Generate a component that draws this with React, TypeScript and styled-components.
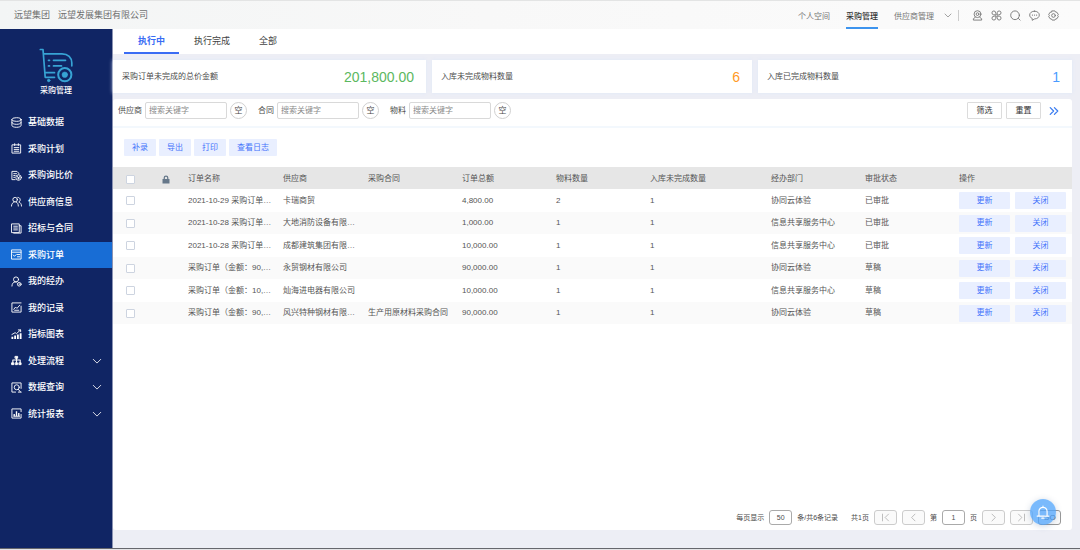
import React, { useId } from "react";
import styled, { createGlobalStyle } from "styled-components";

const GlobalStyle = createGlobalStyle`
  *, *::before, *::after { box-sizing: border-box; }
  body {
    margin: 0;
    font-family: "Liberation Sans", "Noto Sans CJK SC", sans-serif;
    font-size: 8px;
    line-height: 12px;
    color: #4c4c4c;
    background: #fff;
  }
  button, input { font: inherit; color: inherit; margin: 0; }
  button { padding: 0; cursor: pointer; }
  a { color: inherit; text-decoration: none; }
  ul { list-style: none; margin: 0; padding: 0; }
`;

const Page = styled.div`
  min-height: 100vh;
  display: flex;
  flex-direction: column;
`;

const TopBar = styled.header`
  display: flex;
  align-items: stretch;
  justify-content: space-between;
  height: 29px;
  padding: 0 21px 0 14px;
  border-top: 1px solid #e3e4e4;
  background: linear-gradient(90deg, #f3f5f5, #f8f8f8 45%, #fbfbfb);
`;

const Company = styled.div`
  display: flex;
  align-items: center;
  gap: 8px;
  font-size: 9px;
  color: #6f6f6f;
`;

const TopRight = styled.div`
  display: flex;
`;

const TopNav = styled.nav`
  display: flex;
  gap: 16px;
`;

const TopLink = styled.a<{ $active?: boolean }>`
  display: flex;
  align-items: center;
  padding-top: 6px;
  border-bottom: 2px solid ${(p) => (p.$active ? "#3d94ee" : "transparent")};
  color: ${(p) => (p.$active ? "#333" : "#757575")};
  font-weight: ${(p) => (p.$active ? 500 : 400)};
`;

const Tools = styled.div`
  display: flex;
  align-items: center;
  gap: 8px;
`;

const IconButton = styled.button`
  display: flex;
  border: 0;
  background: none;
  color: #777;
`;

const MoreButton = styled(IconButton)`
  align-items: center;
  margin: 0 6px 0 10px;
`;

const Separator = styled.span`
  align-self: center;
  width: 1px;
  height: 11px;
  margin-right: 13px;
  background: #ccc;
`;

const Body = styled.div`
  flex: 1;
  display: flex;
`;

const Sidebar = styled.aside`
  flex: none;
  width: 113px;
  border-right: 1px solid #8b93b3;
  background: #102564;
  color: #fff;
`;

const Module = styled.div`
  display: flex;
  flex-direction: column;
  align-items: center;
  gap: 2px;
  height: 80px;
  padding-top: 19px;
  font-weight: 500;
`;

const Menu = styled.ul`
  display: grid;
  grid-auto-rows: 1fr;
  height: 318px;
`;

const MenuLink = styled.a<{ $active?: boolean }>`
  display: flex;
  align-items: center;
  gap: 5px;
  height: 100%;
  padding: 0 10px 0 11px;
  font-size: 9px;
  font-weight: 500;
  background: ${(p) => (p.$active ? "#186dd5" : "transparent")};
`;

const MenuText = styled.span`
  flex: 1;
  padding-left: 1px;
`;

const Main = styled.main`
  flex: 1;
  min-width: 0;
  display: flex;
  flex-direction: column;
  background: #edeef5;
`;

const Tabs = styled.div`
  display: flex;
  gap: 1px;
  height: 25px;
  padding-left: 11px;
  background: #fff;
`;

const Tab = styled.button<{ $active?: boolean }>`
  padding: 0 14px;
  border: 0;
  border-bottom: 2px solid ${(p) => (p.$active ? "#3a6cf4" : "transparent")};
  background: none;
  font-size: 9px;
  font-weight: ${(p) => (p.$active ? 700 : 400)};
  color: ${(p) => (p.$active ? "#3a6cf4" : "#444")};
`;

const Content = styled.div`
  flex: 1;
  display: flex;
  flex-direction: column;
  gap: 6px;
  padding: 6px 8px 18px 0;
`;

const Stats = styled.div`
  display: grid;
  grid-template-columns: 313fr 320fr 314fr;
  gap: 6px;
`;

const Stat = styled.section`
  display: flex;
  align-items: center;
  justify-content: space-between;
  height: 33px;
  padding: 0 12px 0 9px;
  background: #fff;
  box-shadow: 0 0 4px #dfe8f8;
`;

const StatValue = styled.span<{ $color: string }>`
  font-size: 14px;
  color: ${(p) => p.$color};
`;

const Panel = styled.section`
  flex: 1;
  display: flex;
  flex-direction: column;
  border-radius: 3px;
  background: #fff;
`;

const Filters = styled.form`
  display: flex;
  align-items: center;
  gap: 11px;
  height: 29px;
  padding: 0 13px 4px 5px;
  border-bottom: 2px solid #f3f8fd;
`;

const Field = styled.div`
  display: flex;
  align-items: center;
  gap: 3px;
`;

const SearchInput = styled.input`
  width: 82px;
  height: 17px;
  padding: 0 3px;
  border: 1px solid #d9d9d9;
  border-radius: 2px;
  background: #fff;
  &::placeholder { color: #8a8a8a; opacity: 1; }
`;

const EmptyButton = styled.button`
  width: 17px;
  height: 17px;
  border: 1px solid #d0d0d0;
  border-radius: 50%;
  background: #fff;
`;

const FilterActions = styled.div`
  display: flex;
  align-items: center;
  gap: 4px;
  margin-left: auto;
`;

const OutlineButton = styled.button`
  width: 35px;
  height: 17px;
  border: 1px solid #dcdcdc;
  border-radius: 1px;
  background: #fff;
  color: #333;
`;

const ExpandButton = styled(IconButton)`
  margin-left: 4px;
  color: #3a7cf0;
`;

const Toolbar = styled.div`
  display: flex;
  gap: 3px;
  padding: 11px;
`;

const SoftButton = styled.button`
  height: 17px;
  padding: 0 8px;
  border: 0;
  border-radius: 1px;
  background: #e9efff;
  color: #4474fb;
`;

const Table = styled.table`
  width: 100%;
  table-layout: fixed;
  border-collapse: collapse;
  color: #555;
`;

const Th = styled.th`
  height: 22px;
  padding: 2px 2px 0 6px;
  background: #e6e6e6;
  font-weight: 400;
  text-align: left;
  vertical-align: middle;
`;

const Tr = styled.tr`
  height: 23px;
  &:nth-child(even) { height: 22px; background: #fafafa; }
`;

const Td = styled.td`
  padding: 0 2px 0 6px;
  overflow: hidden;
  white-space: nowrap;
`;

const ActionTd = styled(Td)`
  padding-right: 6px;
`;

const TickTh = styled(Th)`
  padding-left: 13px;
`;

const TickTd = styled(Td)`
  padding-left: 13px;
`;

const LockTh = styled(Th)`
  padding-left: 14px;
`;

const LockIcon = styled.svg`
  display: block;
`;

const Tick = styled.input`
  appearance: none;
  display: block;
  width: 9px;
  height: 9px;
  border: 1px solid #cdd4e0;
  border-radius: 1px;
  background: #fff;
  &:checked { background: #3a6cf4; }
`;

const RowActions = styled.div`
  display: grid;
  grid-template-columns: 1fr 1fr;
  gap: 5px;
`;

const Pager = styled.div`
  display: flex;
  align-items: center;
  justify-content: flex-end;
  gap: 5px;
  margin-top: auto;
  padding: 0 11px 5px;
  font-size: 7px;
`;

const PagerTotal = styled.span`
  margin-left: 8px;
`;

const PageInput = styled.input`
  width: 23px;
  height: 15px;
  padding: 0;
  border: 1px solid #aaa;
  border-radius: 3px;
  background: #fff;
  text-align: center;
`;

const PageButton = styled.button`
  display: flex;
  align-items: center;
  justify-content: center;
  width: 23px;
  height: 15px;
  border: 1px solid #ccc;
  border-radius: 3px;
  background: #fafafa;
  color: #aaa;
`;

const GoButton = styled(PageButton)`
  border-color: #999;
  font-size: 8px;
  color: #444;
`;

const Bell = styled.button`
  position: fixed;
  right: 24px;
  bottom: 25px;
  display: flex;
  align-items: center;
  justify-content: center;
  width: 26px;
  height: 26px;
  border: 0;
  border-radius: 50%;
  background: rgba(80, 164, 251, 0.76);
  box-shadow: 0 1px 6px rgba(60, 90, 140, 0.25);
  color: #fff;
`;

const BottomEdge = styled.footer`
  height: 2px;
  border-top: 1px solid #66676d;
  background: #e4e4e6;
`;

type IconProps = { size?: number; weight?: number; children: React.ReactNode };

const Icon = ({ size = 11, weight = 2, children }: IconProps) => (
  <svg
    width={size}
    height={size}
    viewBox="0 0 24 24"
    fill="none"
    stroke="currentColor"
    strokeWidth={weight}
    strokeLinecap="round"
    strokeLinejoin="round"
    aria-hidden="true"
  >
    {children}
  </svg>
);

const CartLogo = () => (
  <svg width="34" height="35" viewBox="0 0 34 35" fill="none" stroke="#37a3d4" strokeWidth="1.700" strokeLinecap="round" strokeLinejoin="round" aria-hidden="true">
    <path d="M1.300 1.500H4l2.200 27.800h9.300M7 24.700h8.500" />
    <path d="M4.800 5.800H23c6 0 9.800 4 9.800 9v3" />
    <path d="M9.500 12.300h1M14.500 12.300h12M9.500 17.900h1M14.500 17.900h8" />
    <circle cx="25.800" cy="26.700" r="6.600" strokeWidth="2" />
    <circle cx="25.800" cy="26.700" r="2.800" fill="#37a3d4" strokeWidth="0.500" />
    <circle cx="9.700" cy="32.500" r="1.200" fill="#37a3d4" strokeWidth="1" />
  </svg>
);

const Chevron = () => (
  <Icon size={10}><path d="M3 8l9 9 9-9" /></Icon>
);

const menu: { label: string; icon: React.ReactNode; active?: boolean; open?: boolean }[] = [
  { label: "基础数据", icon: <><ellipse cx="12" cy="5.500" rx="10" ry="4" /><path d="M2 5.500v13c0 2.200 4.500 4 10 4s10-1.800 10-4v-13M2 12c0 2.200 4.500 4 10 4s10-1.800 10-4" /></> },
  { label: "采购计划", icon: <><path d="M3 4h18v18H3zM8 1.500v4M16 1.500v4M7 10h10M7 14h10M7 18h10" /></> },
  { label: "采购询比价", icon: <><path d="M9 21H2V3h11l4 4v2M6 8h6M6 12h3M6 16h2" /><circle cx="16.500" cy="16.500" r="6" /><path d="M14 14l2.500 3 2.500-3M16.500 17v3M14.500 17.500h4" /></> },
  { label: "供应商信息", icon: <><circle cx="9" cy="8" r="5" /><path d="M1 22c0-5 3-8 6-9M11 13c3 1 5 4 5 9M15 3c6 0 7 8 2 10 3 1 6 4 6 9" /></> },
  { label: "招标与合同", icon: <><path d="M2 2h16v19H2zM18 6h4v16H6M6 7h8M6 11h8M6 15h8" /></> },
  { label: "采购订单", icon: <><path d="M2 2h20v20H2zM2 7h20M5 13l2.500 3 4-4M14 12h5M14 17h5" /></>, active: true },
  { label: "我的经办", icon: <><circle cx="11" cy="7.500" r="5.500" /><path d="M2 22c0-5 3-9 7-9h3" /><circle cx="18" cy="18" r="4" /><path d="M18 17v2" /></> },
  { label: "我的记录", icon: <><path d="M22 9v13H2V2h20M6 16l4-5 3 3 6-7M8 18h9" /></> },
  { label: "指标图表", icon: <><path d="M3 22v-5M9 22v-8M15 22V12M21 22V9" strokeWidth="4" strokeLinecap="butt" /><path d="M2 12l7-4 3 2 9-8M16 2h5v4" /></> },
  { label: "处理流程", icon: <><path d="M12 6v10M4 16v-5h16v5" strokeWidth="2.500" /><path d="M9.500 3h5v4h-5zM2 17h4v4H2zM10 17h4v4h-4zM18 17h4v4h-4z" fill="currentColor" /></>, open: true },
  { label: "数据查询", icon: <><path d="M10 22H2V2h20v12" /><circle cx="12.500" cy="11.500" r="5.500" /><path d="M16 16l5 6M16 22h6" /></>, open: true },
  { label: "统计报表", icon: <><path d="M22 14v8H2V2h20v6" /><path d="M7 18v-5M12 18V7M17 18v-7" strokeWidth="3" strokeLinecap="butt" /><path d="M6 18h13" /></>, open: true },
];

const tools: { label: string; icon: React.ReactNode }[] = [
  { label: "客服", icon: <><circle cx="12" cy="9" r="7.500" /><circle cx="12" cy="9" r="3" /><path d="M7 16l-4 3v3h18v-3l-4-3" /></> },
  { label: "应用", icon: <path d="M10.500 10.500H6A4.200 4.200 0 1 1 10.500 6zM13.500 10.500V6a4.200 4.200 0 1 1 4.500 4.500zM10.500 13.500V18A4.200 4.200 0 1 1 6 13.500zM13.500 13.500H18a4.200 4.200 0 1 1-4.500 4.500z" /> },
  { label: "搜索", icon: <><circle cx="11" cy="11.500" r="9.500" /><path d="M18.500 18.500l3.500 3.500" /></> },
  { label: "消息", icon: <><path d="M12 2.500c6 0 10.500 3.800 10.500 8.500S18 19.500 12 19.500l-5 3v-4C3.500 17 1.500 14.200 1.500 11 1.500 6.300 6 2.500 12 2.500z" /><path d="M7.500 11h.1M12 11h.1M16.500 11h.1" strokeWidth="2.600" /></> },
  { label: "设置", icon: <><path d="M9 2h6l1.500 2.500 3 .5 3 5-1.500 2 1.500 2-3 5-3 .5L15 22H9l-1.500-2.500-3-.5-3-5L3 12l-1.500-2 3-5 3-.5z" /><circle cx="12" cy="12" r="4" /></> },
];

const columns = [95, 85, 94, 94, 94, 121, 94, 94, 119];
const heads = ["订单名称", "供应商", "采购合同", "订单总额", "物料数量", "入库未完成数量", "经办部门", "审批状态", "操作"];

const orders = [
  ["2021-10-29 采购订单…", "卡瑞商贸", "", "4,800.00", "2", "1", "协同云体验", "已审批"],
  ["2021-10-28 采购订单…", "大地消防设备有限…", "", "1,000.00", "1", "1", "信息共享服务中心", "已审批"],
  ["2021-10-28 采购订单…", "成都建筑集团有限…", "", "10,000.00", "1", "1", "信息共享服务中心", "已审批"],
  ["采购订单（金额：90,…", "永贸钢材有限公司", "", "90,000.00", "1", "1", "协同云体验", "草稿"],
  ["采购订单（金额：10,…", "灿海进电器有限公司", "", "10,000.00", "1", "1", "信息共享服务中心", "草稿"],
  ["采购订单（金额：90,…", "风兴特种钢材有限…", "生产用原材料采购合同", "90,000.00", "1", "1", "协同云体验", "草稿"],
];

const SearchField = ({ label }: { label: string }) => {
  const id = useId();
  return (
    <Field>
      <label htmlFor={id}>{label}</label>
      <SearchInput id={id} type="text" placeholder="搜索关键字" />
      <EmptyButton type="button">空</EmptyButton>
    </Field>
  );
};

export default function App() {
  return (
    <>
      <GlobalStyle />
      <Page>
        <TopBar>
          <Company>
            <span>远望集团</span>
            <span>远望发展集团有限公司</span>
          </Company>
          <TopRight>
            <TopNav>
              <TopLink href="#space">个人空间</TopLink>
              <TopLink href="#purchase" $active>采购管理</TopLink>
              <TopLink href="#supplier">供应商管理</TopLink>
            </TopNav>
            <MoreButton type="button" aria-label="更多">
              <Icon size={8}><path d="M3 9l9 9 9-9" /></Icon>
            </MoreButton>
            <Separator />
            <Tools>
              {tools.map((t) => (
                <IconButton key={t.label} type="button" aria-label={t.label}>
                  <Icon>{t.icon}</Icon>
                </IconButton>
              ))}
            </Tools>
          </TopRight>
        </TopBar>
        <Body>
          <Sidebar>
            <Module>
              <CartLogo />
              <span>采购管理</span>
            </Module>
            <Menu>
              {menu.map((m) => (
                <li key={m.label}>
                  <MenuLink href="#menu" $active={m.active}>
                    <Icon>{m.icon}</Icon>
                    <MenuText>{m.label}</MenuText>
                    {m.open && <Chevron />}
                  </MenuLink>
                </li>
              ))}
            </Menu>
          </Sidebar>
          <Main>
            <Tabs>
              <Tab type="button" $active>执行中</Tab>
              <Tab type="button">执行完成</Tab>
              <Tab type="button">全部</Tab>
            </Tabs>
            <Content>
              <Stats>
                <Stat>采购订单未完成的总价金额<StatValue $color="#5cb860">201,800.00</StatValue></Stat>
                <Stat>入库未完成物料数量<StatValue $color="#ff9a1f">6</StatValue></Stat>
                <Stat>入库已完成物料数量<StatValue $color="#4a9bff">1</StatValue></Stat>
              </Stats>
              <Panel>
                <Filters>
                  <SearchField label="供应商" />
                  <SearchField label="合同" />
                  <SearchField label="物料" />
                  <FilterActions>
                    <OutlineButton type="button">筛选</OutlineButton>
                    <OutlineButton type="reset">重置</OutlineButton>
                    <ExpandButton type="button" aria-label="展开">
                      <Icon size={10} weight={3}><path d="M3 4l8 8-8 8M13 4l8 8-8 8" /></Icon>
                    </ExpandButton>
                  </FilterActions>
                </Filters>
                <Toolbar>
                  <SoftButton type="button">补录</SoftButton>
                  <SoftButton type="button">导出</SoftButton>
                  <SoftButton type="button">打印</SoftButton>
                  <SoftButton type="button">查看日志</SoftButton>
                </Toolbar>
                <Table>
                  <colgroup>
                    <col width={35} />
                    <col width={34} />
                    {columns.map((w, i) => <col key={i} width={w} />)}
                  </colgroup>
                  <thead>
                    <tr>
                      <TickTh><Tick type="checkbox" aria-label="全选" /></TickTh>
                      <LockTh aria-label="锁定">
                        <LockIcon width="8" height="9" viewBox="0 0 16 18" fill="#66788a" aria-hidden="true">
                          <path d="M1 8h14v9H1z" />
                          <path d="M4.500 8V5.500a3.500 3.500 0 0 1 7 0V8" fill="none" stroke="#66788a" strokeWidth="2.500" />
                        </LockIcon>
                      </LockTh>
                      {heads.map((h) => <Th key={h}>{h}</Th>)}
                    </tr>
                  </thead>
                  <tbody>
                    {orders.map((row, r) => (
                      <Tr key={r}>
                        <TickTd><Tick type="checkbox" aria-label={row[0]} /></TickTd>
                        <Td />
                        {row.map((cell, c) => <Td key={c}>{cell}</Td>)}
                        <ActionTd>
                          <RowActions>
                            <SoftButton type="button">更新</SoftButton>
                            <SoftButton type="button">关闭</SoftButton>
                          </RowActions>
                        </ActionTd>
                      </Tr>
                    ))}
                  </tbody>
                </Table>
                <Pager>
                  <label htmlFor="page-size">每页显示</label>
                  <PageInput id="page-size" defaultValue="50" />
                  <span>条/共6条记录</span>
                  <PagerTotal>共1页</PagerTotal>
                  <PageButton type="button" aria-label="首页"><Icon size={9}><path d="M4 3v18M20 3l-9 9 9 9" /></Icon></PageButton>
                  <PageButton type="button" aria-label="上一页"><Icon size={9}><path d="M16 3l-9 9 9 9" /></Icon></PageButton>
                  <label htmlFor="page-number">第</label>
                  <PageInput id="page-number" defaultValue="1" />
                  <span>页</span>
                  <PageButton type="button" aria-label="下一页"><Icon size={9}><path d="M8 3l9 9-9 9" /></Icon></PageButton>
                  <PageButton type="button" aria-label="末页"><Icon size={9}><path d="M20 3v18M4 3l9 9-9 9" /></Icon></PageButton>
                  <GoButton type="button">GO</GoButton>
                </Pager>
              </Panel>
            </Content>
          </Main>
        </Body>
        <BottomEdge />
      </Page>
      <Bell type="button" aria-label="通知">
        <Icon size={14}><path d="M2 19h20M5 19v-8a7 7 0 0 1 14 0v8M12 4V2M10 22.500h4" /></Icon>
      </Bell>
    </>
  );
}
